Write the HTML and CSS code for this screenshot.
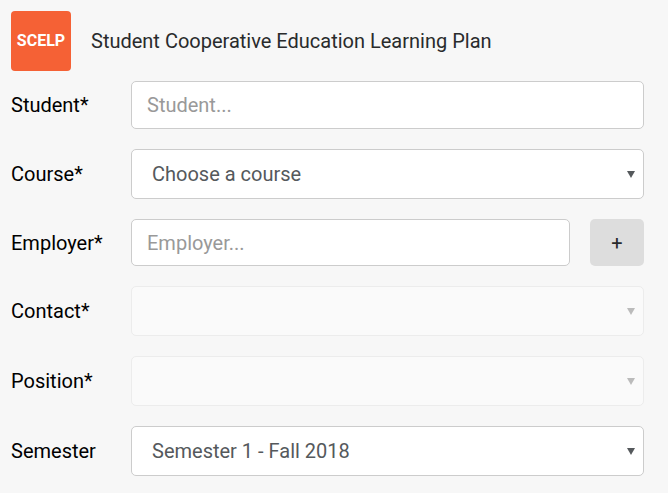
FILE: index.html
```html
<!DOCTYPE html>
<html lang="en">
<head>
  <meta charset="UTF-8">
  <meta name="viewport" content="width=device-width, initial-scale=1">
  <title>Student Cooperative Education Learning Plan</title>
  <link rel="stylesheet" href="styles.css">
</head>
<body>
  <header class="header">
    <div class="logo">SCELP</div>
    <h1>Student Cooperative Education Learning Plan</h1>
  </header>

  <form class="plan-form">
    <div class="form-row">
      <label for="student">Student*</label>
      <input type="text" id="student" name="student" placeholder="Student..." required>
    </div>
    <div class="form-row">
      <label for="course">Course*</label>
      <div class="select">
        <select id="course" name="course" required>
          <option value="">Choose a course</option>
        </select>
      </div>
    </div>
    <div class="form-row">
      <label for="employer">Employer*</label>
      <input type="text" id="employer" name="employer" placeholder="Employer..." required>
      <button type="button" class="btn" aria-label="Add employer">+</button>
    </div>
    <div class="form-row">
      <label for="contact">Contact*</label>
      <div class="select disabled">
        <select id="contact" name="contact" disabled></select>
      </div>
    </div>
    <div class="form-row">
      <label for="position">Position*</label>
      <div class="select disabled">
        <select id="position" name="position" disabled></select>
      </div>
    </div>
    <div class="form-row">
      <label for="semester">Semester</label>
      <div class="select">
        <select id="semester" name="semester">
          <option value="1">Semester 1 - Fall 2018</option>
        </select>
      </div>
    </div>
  </form>
</body>
</html>
```

FILE: styles.css
```css
* {
  margin: 0;
  padding: 0;
  box-sizing: border-box;
}

body {
  background: #f7f7f7;
  padding: 11px 24px 16px 11px;
  font-family: Roboto, Arial, sans-serif;
  font-size: 20px;
  line-height: 24px;
  color: #000;
}

.header {
  display: flex;
  align-items: center;
  gap: 20px;
  margin-bottom: 10px;
}

.header h1 {
  font-size: 20px;
  font-weight: 400;
  color: #292b2c;
}

.logo {
  display: flex;
  align-items: center;
  justify-content: center;
  width: 60px;
  height: 60px;
  background: #f56135;
  border-radius: 4px;
  color: #fff;
  font-size: 16px;
  font-weight: 700;
}

.plan-form {
  display: flex;
  flex-direction: column;
  gap: 20px;
}

.form-row {
  display: flex;
  align-items: center;
}

.form-row label {
  flex: 0 0 120px;
}

.form-row input,
.form-row select {
  width: 100%;
  height: 48px;
  background: #fff;
  border: 1px solid #ccc;
  border-radius: 5px;
  color: #55595c;
  font: inherit;
}

.form-row input {
  flex: 1;
  min-width: 0;
  padding: 0 15px;
}

.form-row input::placeholder {
  color: #999;
}

.select {
  flex: 1;
  min-width: 0;
  position: relative;
}

.form-row select {
  display: block;
  height: 50px;
  padding: 0 20px;
  appearance: none;
}

/* drop-down arrow */
.select::after {
  content: '';
  position: absolute;
  top: 22px;
  right: 9px;
  border: 4px solid transparent;
  border-top: 7px solid #55595c;
  border-bottom: 0;
  pointer-events: none;
}

.form-row select:disabled {
  background: #fafafa;
  border-color: #ececec;
  opacity: 1;
}

.select.disabled::after {
  border-top-color: #bbb;
}

.btn {
  width: 54px;
  height: 47px;
  margin-left: 20px;
  background: #ddd;
  border: none;
  border-radius: 5px;
  color: #292b2c;
  font: inherit;
  cursor: pointer;
}

/* shares its row with the add button */
#employer {
  height: 47px;
}
```
